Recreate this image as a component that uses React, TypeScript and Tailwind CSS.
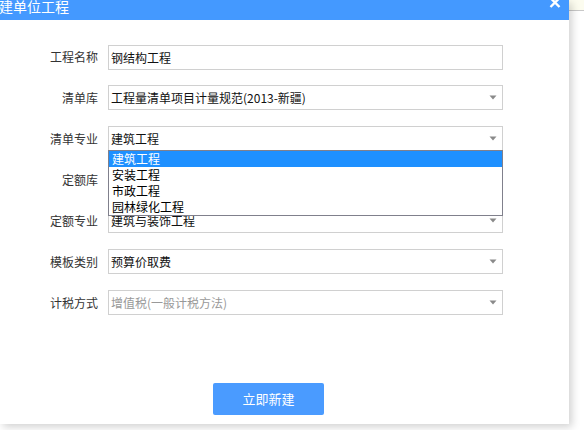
import { useState } from 'react';

type Field = {
  label: string;
  value: string;
  kind: 'input' | 'select';
  muted?: boolean;
};

const fields: Field[] = [
  { label: '工程名称', value: '钢结构工程', kind: 'input' },
  { label: '清单库', value: '工程量清单项目计量规范(2013-新疆)', kind: 'select' },
  { label: '清单专业', value: '建筑工程', kind: 'select' },
  { label: '定额库', value: '', kind: 'select' },
  { label: '定额专业', value: '建筑与装饰工程', kind: 'select' },
  { label: '模板类别', value: '预算价取费', kind: 'select' },
  { label: '计税方式', value: '增值税(一般计税方法)', kind: 'select', muted: true },
];

const specialties = ['建筑工程', '安装工程', '市政工程', '园林绿化工程'];

function Caret() {
  return (
    <svg width="8" height="5" viewBox="0 0 8 5" className="shrink-0">
      <path d="M0.5 0.5 H7.5 L4 4.5 Z" fill="#8a8a8a" />
    </svg>
  );
}

function SpecialtyList({ active }: { active: number }) {
  return (
    <div className="absolute left-0 top-[24px] z-10 w-full border border-[#80808c] bg-white">
      {specialties.map((s, i) => (
        <div
          key={s}
          className={
            i === active
              ? 'h-[16px] bg-[#1e90ff] pl-[3px] text-[12px] leading-[16px] text-white'
              : 'h-[16px] pl-[3px] text-[12px] leading-[16px] text-black'
          }
        >
          {s}
        </div>
      ))}
    </div>
  );
}

export default function App() {
  const [name, setName] = useState('钢结构工程');

  return (
    <div
      className="flex h-[430px] w-[584px] overflow-hidden bg-white"
      style={{ fontFamily: '"Microsoft YaHei", "Noto Sans CJK SC", "Noto Sans", sans-serif' }}
    >
      {/* dialog */}
      <div className="relative z-10 flex h-[424px] w-[569px] shrink-0 flex-col bg-white shadow-[3px_3px_8px_rgba(0,0,0,0.18)]">
        <div className="flex h-[20px] shrink-0 items-start justify-between overflow-hidden bg-[#4499ff]">
          <span className="-ml-[15px] -mt-[4px] text-[14px] leading-[20px] text-white">新建单位工程</span>
          <svg width="12" height="8" viewBox="0 0 12 8" className="mr-[8px]">
            <path d="M1.5 -2 L10.5 7 M10.5 -2 L1.5 7" stroke="#fff" strokeWidth="2.4" />
          </svg>
        </div>

        <div className="flex flex-col gap-[16px] pt-[24px]">
          {fields.map((f, i) => (
            <div key={f.label} className="flex h-[25px] items-center">
              <span className="w-[98px] text-right text-[12px] text-[#333]">{f.label}</span>
              <div className="relative ml-[10px] h-[25px] w-[395px]">
                {f.kind === 'input' ? (
                  <input
                    value={name}
                    onChange={(e) => setName(e.target.value)}
                    className="h-full w-full border border-[#d0d0d0] pl-[2px] text-[12px] text-[#111] outline-none"
                  />
                ) : (
                  <div className="flex h-full w-full items-center justify-between border border-[#d0d0d0] pl-[2px] pr-[5px]">
                    <span className={f.muted ? 'text-[12px] text-[#999]' : 'text-[12px] text-[#111]'}>{f.value}</span>
                    <Caret />
                  </div>
                )}
                {i === 2 && <SpecialtyList active={0} />}
              </div>
            </div>
          ))}
        </div>

        <div className="mt-[68px] flex pl-[213px]">
          <button className="h-[32px] w-[111px] rounded-[2px] bg-[#4a9bff] text-[13px] text-white">立即新建</button>
        </div>
      </div>

      {/* backdrop strip to the right */}
      <div className="flex flex-1 flex-col">
        <div className="h-[11px] border-b border-[#c8c8c8] bg-[#fcfcef]" />
        <div className="flex-1 bg-white" />
      </div>
    </div>
  );
}
